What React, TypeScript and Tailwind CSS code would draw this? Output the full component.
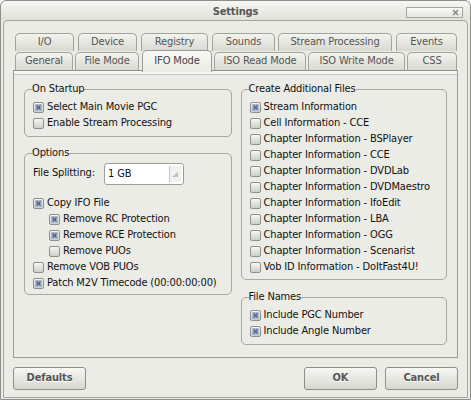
import React from 'react';

type Tab = { label: string; w: string; ml: string };

const row1: Tab[] = [
  { label: 'I/O', w: 'w-[59px]', ml: 'ml-0' },
  { label: 'Device', w: 'w-[59px]', ml: 'ml-[4px]' },
  { label: 'Registry', w: 'w-[67px]', ml: 'ml-[4px]' },
  { label: 'Sounds', w: 'w-[63px]', ml: 'ml-[4px]' },
  { label: 'Stream Processing', w: 'w-[114px]', ml: 'ml-[3px]' },
  { label: 'Events', w: 'w-[61px]', ml: 'ml-[4px]' },
];

const row2: Tab[] = [
  { label: 'General', w: 'w-[58px]', ml: 'ml-0' },
  { label: 'File Mode', w: 'w-[64px]', ml: 'ml-[2px]' },
  { label: 'IFO Mode', w: 'w-[70px]', ml: 'ml-[3px]' },
  { label: 'ISO Read Mode', w: 'w-[92px]', ml: 'ml-[2px]' },
  { label: 'ISO Write Mode', w: 'w-[97px]', ml: 'ml-[2px]' },
  { label: 'CSS', w: 'w-[50px]', ml: 'ml-[2px]' },
];

const extraFiles: [string, boolean][] = [
  ['Stream Information', true],
  ['Cell Information - CCE', false],
  ['Chapter Information - BSPlayer', false],
  ['Chapter Information - CCE', false],
  ['Chapter Information - DVDLab', false],
  ['Chapter Information - DVDMaestro', false],
  ['Chapter Information - IfoEdit', false],
  ['Chapter Information - LBA', false],
  ['Chapter Information - OGG', false],
  ['Chapter Information - Scenarist', false],
  ['Vob ID Information - DoItFast4U!', false],
];

function Box({ checked }: { checked?: boolean }) {
  return (
    <span className="flex h-[11px] w-[11px] shrink-0 items-center justify-center rounded-[2px] border border-[#8f8f8b] bg-gradient-to-b from-[#f6f6f3] to-[#cfcfca]">
      {checked && (
        <span className="flex h-[7px] w-[7px] items-center justify-center bg-[#aab8d0]">
          <svg width="5" height="5" viewBox="0 0 5 5">
            <path d="M0.5 0.5 L4.5 4.5 M4.5 0.5 L0.5 4.5" stroke="#4d5e82" strokeWidth="1.2" />
          </svg>
        </span>
      )}
    </span>
  );
}

function Check({ label, checked, indent }: { label: string; checked?: boolean; indent?: boolean }) {
  return (
    <div className={`flex h-[16px] items-center gap-[3px] whitespace-nowrap ${indent ? 'pl-[16px]' : ''}`}>
      <Box checked={checked} />
      <span>{label}</span>
    </div>
  );
}

function Group({ title, className, children }: { title: string; className?: string; children: React.ReactNode }) {
  return (
    <fieldset className={`rounded-[5px] border border-[#a9a9a3] pl-[8px] pr-[6px] ${className ?? ''}`}>
      <legend className="-ml-[1px] px-0 leading-[12px] text-[#111]">{title}</legend>
      {children}
    </fieldset>
  );
}

function TabItem({ tab, selected }: { tab: Tab; selected?: boolean }) {
  if (selected) {
    return (
      <div
        className={`${tab.w} ${tab.ml} relative z-10 -mb-[2px] flex h-[22px] items-start justify-center rounded-t-[5px] border border-b-0 border-[#9b9b95] bg-gradient-to-b from-[#f8f8f4] to-[#ecece6] pt-[2px] text-[#444]`}
      >
        {tab.label}
      </div>
    );
  }
  return (
    <div
      className={`${tab.w} ${tab.ml} flex h-[18px] items-center justify-center whitespace-nowrap rounded-t-[5px] border border-b-0 border-[#a3a39d] bg-gradient-to-b from-[#f4f4ef] to-[#d9d9d2] text-[#555]`}
    >
      {tab.label}
    </div>
  );
}

export default function App() {
  return (
    <div className="flex h-[400px] w-[471px] flex-col rounded-t-[6px] border border-[#8e8e88] bg-[#ecece6] font-['DejaVu_Sans_Condensed','Liberation_Sans',sans-serif] text-[11px] tracking-[-0.15px] text-[#111]">
      <div className="relative flex h-[19px] shrink-0 items-center justify-center rounded-t-[6px] bg-gradient-to-b from-[#f6f6f2] to-[#e2e2dc] pt-[4px]">
        <span className="font-bold text-[#555]">Settings</span>
        <div className="absolute right-[7px] top-[6px] flex h-[11px] w-[57px] items-center justify-end border border-[#a5a59f] bg-gradient-to-b from-[#fafaf7] to-[#e6e6e0] pr-[3px]">
          <svg width="7" height="7" viewBox="0 0 7 7">
            <path d="M1 1 L6 6 M6 1 L1 6" stroke="#888" strokeWidth="1.6" />
          </svg>
        </div>
      </div>

      <div className="mx-[2px] mb-[1px] flex flex-1 flex-col rounded-t-[4px] border border-[#a4a49e] px-[9px] pt-[12px]">
        <div className="flex h-[18px] pl-[2px]">
          {row1.map((t) => (
            <TabItem key={t.label} tab={t} />
          ))}
        </div>
        <div className="flex h-[19px] items-end pl-[2px]">
          {row2.map((t) => (
            <TabItem key={t.label} tab={t} selected={t.label === 'IFO Mode'} />
          ))}
        </div>

        <div className="flex h-[288px] gap-[9px] border border-[#9b9b95] border-t-[#8f8f89] px-[10px] pt-[12px] shadow-[inset_0_3px_0_#f7f7f3,inset_0_4px_0_#c8c8c2]">
          <div className="flex w-[208px] flex-col gap-[10px]">
            <Group title="On Startup" className="h-[54px]">
              <div className="pt-[4px]">
                <Check label="Select Main Movie PGC" checked />
                <Check label="Enable Stream Processing" />
              </div>
            </Group>
            <Group title="Options" className="h-[148px]">
              <div className="flex h-[26px] items-end">
                <span className="w-[71px] whitespace-nowrap pb-[4px]">File Splitting:</span>
                <div className="flex h-[22px] w-[80px] items-center rounded-[3px] border border-[#a0a09a] bg-white pl-[3px] pr-[2px]">
                  <span className="flex-1">1 GB</span>
                  <span className="flex h-[16px] w-[12px] items-center justify-center border-l border-[#c4c4c0] bg-[#f1f1ee]">
                    <svg width="7" height="5" viewBox="0 0 7 5">
                      <path d="M6 0 L6 5 L0 5 Z" fill="#c0c0bc" />
                    </svg>
                  </span>
                </div>
              </div>
              <div className="pt-[10px]">
                <Check label="Copy IFO File" checked />
                <Check label="Remove RC Protection" checked indent />
                <Check label="Remove RCE Protection" checked indent />
                <Check label="Remove PUOs" indent />
                <Check label="Remove VOB PUOs" />
                <Check label="Patch M2V Timecode (00:00:00:00)" checked />
              </div>
            </Group>
          </div>

          <div className="flex w-[207px] flex-col gap-[11px]">
            <Group title="Create Additional Files" className="h-[197px]">
              <div className="pt-[4px]">
                {extraFiles.map(([l, c]) => (
                  <Check key={l} label={l} checked={c} />
                ))}
              </div>
            </Group>
            <Group title="File Names" className="h-[54px]">
              <div className="pt-[4px]">
                <Check label="Include PGC Number" checked />
                <Check label="Include Angle Number" checked />
              </div>
            </Group>
          </div>
        </div>

        <div className="mt-[9px] flex">
          <Button label="Defaults" />
          <div className="flex-1" />
          <Button label="OK" />
          <div className="ml-[8px]">
            <Button label="Cancel" />
          </div>
        </div>
      </div>
    </div>
  );
}

function Button({ label }: { label: string }) {
  return (
    <div className="flex h-[23px] w-[73px] items-center justify-center rounded-[3px] border border-[#8e8e88] bg-gradient-to-b from-[#f7f7f3] to-[#d8d8d1] font-bold text-[#555] [text-shadow:0_1px_0_#fff]">
      {label}
    </div>
  );
}
